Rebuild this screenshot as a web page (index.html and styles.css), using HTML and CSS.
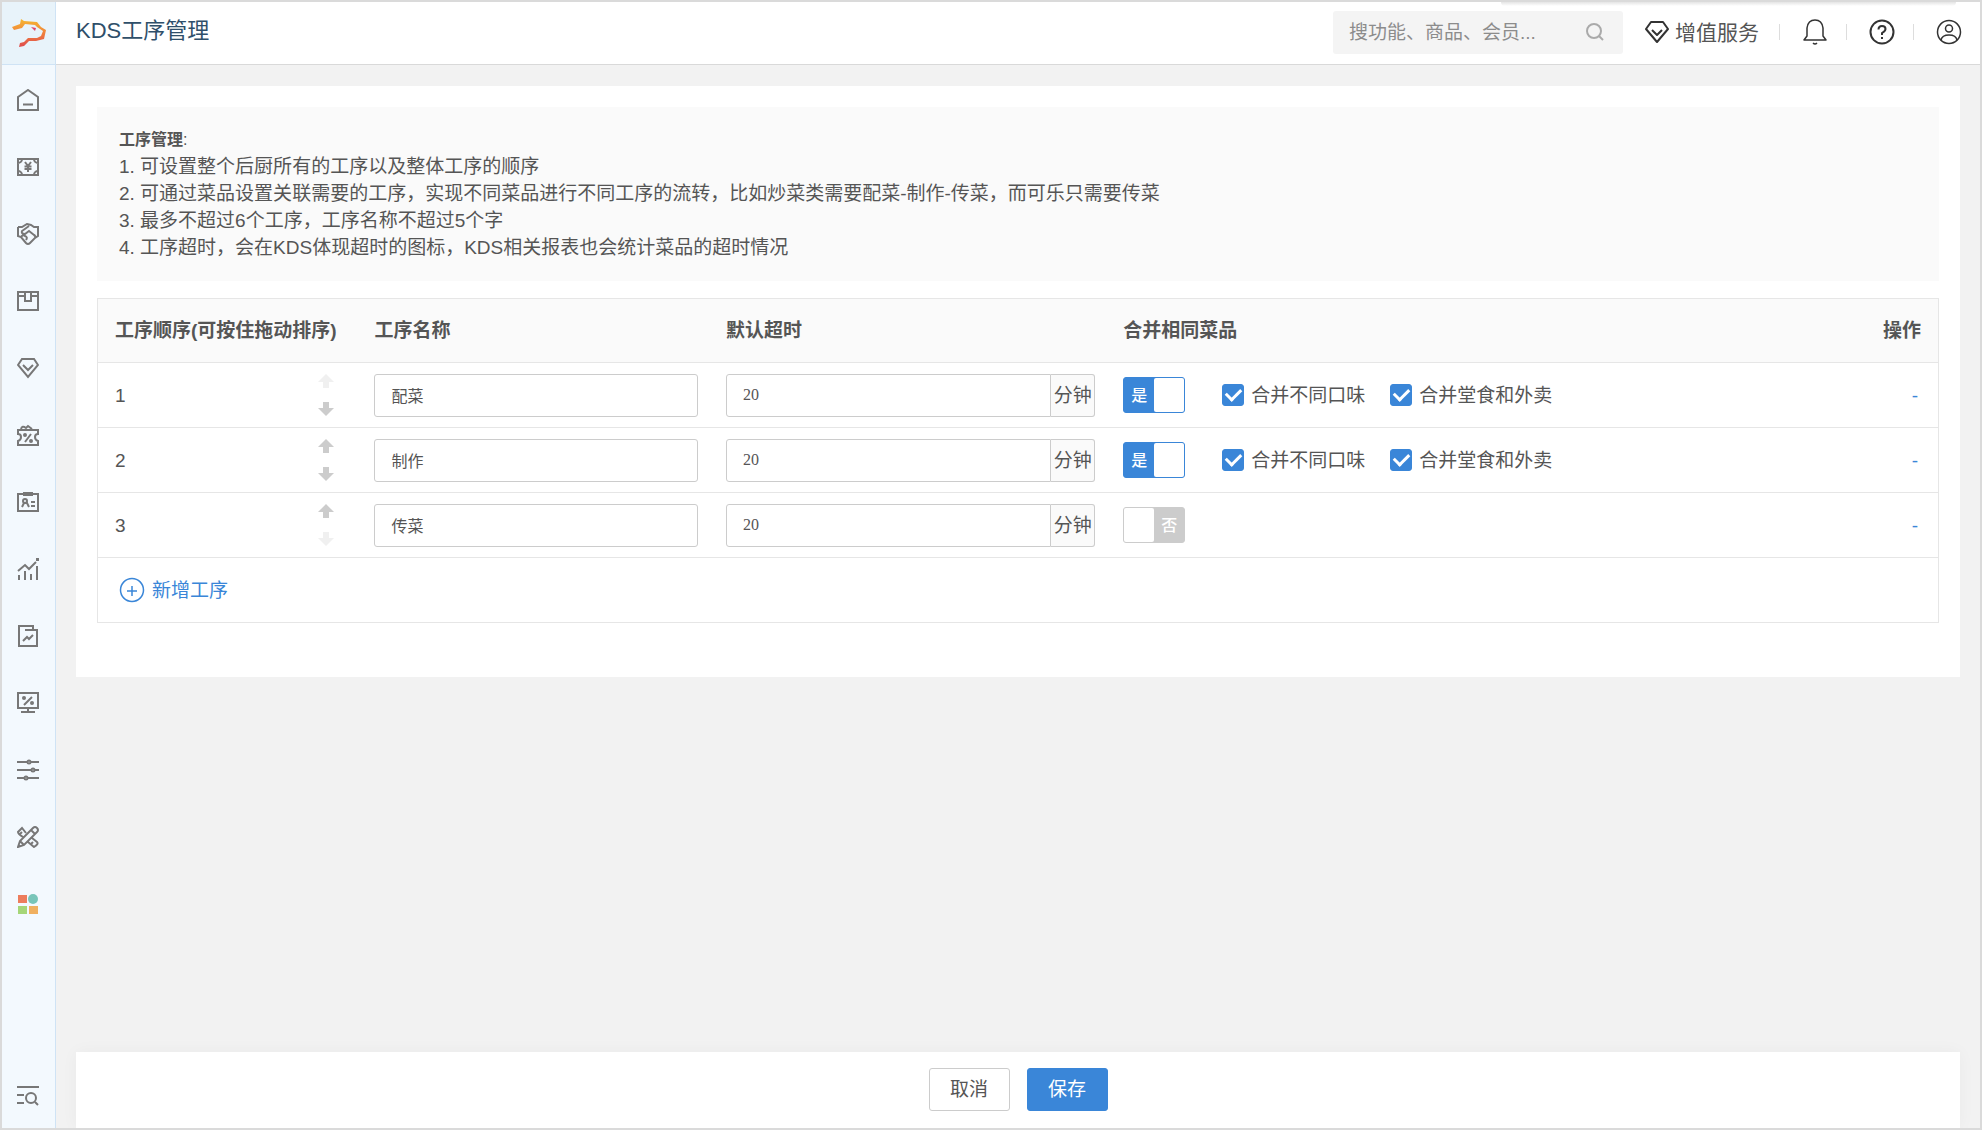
FILE: index.html
```html
<!DOCTYPE html>
<html lang="zh-CN">
<head>
    <meta charset="UTF-8">
    <meta name="viewport" content="width=device-width, initial-scale=1.0">
    <title>KDS工序管理</title>
    <link rel="stylesheet" href="styles.css">
</head>
<body>
    <aside class="sidebar">
        <a href="#" class="logo" aria-label="首页">
            <svg width="34" height="30" viewBox="0 0 34 30" fill="none">
                <defs>
                    <linearGradient id="logo-color" x1="0" y1="0" x2="0" y2="1">
                        <stop offset="0" stop-color="#f6b830"/>
                        <stop offset="0.5" stop-color="#f0813c"/>
                        <stop offset="1" stop-color="#de4a4e"/>
                    </linearGradient>
                </defs>
                <path d="M0 9L8 6L9 1L12 3L25 4L29 9L34 12L32 21L24 23L17 23L12 28L7 29L8 25L12 24L16 20L25 20L29 18L31 13L25 9L23 7L13 6L10 10L2 12Z" fill="url(#logo-color)"/>
                <path d="M19 9L24 10L23 13Z" fill="#e0456a"/>
            </svg>
        </a>
        <nav class="menu">
            <a href="#" aria-label="概览">
                <svg class="icon" viewBox="0 0 22 22"><path d="M1 8L11 1L21 8V21H1ZM6 15.500H16"/></svg>
            </a>
            <a href="#" aria-label="收银">
                <svg class="icon" viewBox="0 0 22 22"><path d="M1 3H21V19H1ZM1 7A4 4 0 0 0 5 3M17 3A4 4 0 0 0 21 7M1 15A4 4 0 0 1 5 19M21 15A4 4 0 0 0 17 19M8 6L11 10L14 6M11 10V16M7.500 10.500H14.500M7.500 13H14.500"/></svg>
            </a>
            <a href="#" aria-label="合作">
                <svg class="icon" viewBox="0 0 22 22"><path d="M1 4H5L10 1L14 2L17 4H21V13L18 15M1 4V13L4 14L9 20Q11 22 13 20L18 15Q19 13 17 12L12 8L8 11Q4 11 5 8L12 3M4 14Q6 11 8 13Q11 14 9 17"/></svg>
            </a>
            <a href="#" aria-label="库存">
                <svg class="icon" viewBox="0 0 22 22"><path d="M1 2H21V20H1ZM1 6H8M14 6H21M8 2V11H14V2"/></svg>
            </a>
            <a href="#" aria-label="会员">
                <svg class="icon" viewBox="0 0 22 22"><path d="M5 2H17L21 8L11 20L1 8ZM6 8L11 13L16 8"/></svg>
            </a>
            <a href="#" aria-label="优惠">
                <svg class="icon" viewBox="0 0 22 22"><path d="M1 6H21V10Q18 10 18 13Q18 16 21 17V21H1V17Q4 16 4 13Q4 10 1 10ZM4 5Q5 1 9 4L11 2L15 5M8 18L14 10"/><circle cx="8" cy="11" r="1"/><circle cx="14" cy="17" r="1"/></svg>
            </a>
            <a href="#" aria-label="员工">
                <svg class="icon" viewBox="0 0 22 22"><path d="M7 3H1V20H21V3H15M7 2H15V4H7ZM5 16L7 12H10L12 16M14 11H18M14 15H18"/><circle cx="8" cy="10" r="2"/></svg>
            </a>
            <a href="#" aria-label="统计">
                <svg class="icon" viewBox="0 0 22 22"><path d="M1 13L8 7L12 11L19 4M2 17V22M8 13V22M14 16V22M20 8V22"/><path d="M19 0H22V3H19Z" class="solid"/></svg>
            </a>
            <a href="#" aria-label="报表">
                <svg class="icon" viewBox="0 0 22 22"><path d="M16 5V1H2V21H20V5H8M6 16L10 12L12 14L16 10"/></svg>
            </a>
            <a href="#" aria-label="营销">
                <svg class="icon" viewBox="0 0 22 22"><path d="M1 1H21V16H1ZM11 16V19M4 20H18M7 13L15 5"/><circle cx="7" cy="6" r="2" class="solid"/><circle cx="15" cy="11" r="2" class="solid"/></svg>
            </a>
            <a href="#" aria-label="设置">
                <svg class="icon" viewBox="0 0 22 22"><path d="M0 3H22M0 11H22M0 19H22"/><g class="knob"><circle cx="12" cy="3" r="1.500"/><circle cx="16" cy="11" r="1.500"/><circle cx="9" cy="19" r="1.500"/></g></svg>
            </a>
            <a href="#" aria-label="工具">
                <svg class="icon" viewBox="0 0 22 22"><path d="M1 21L3 15L16 2Q18 0 20 2Q22 4 20 6L7 19ZM14 4L18 8M3 15L7 19M9 7L5 2L1 6Q1 8 6 11M3 8L5 6M15 12L20 16Q22 18 17 21L11 16M14 18L16 16"/></svg>
            </a>
            <a href="#" aria-label="应用">
                <svg width="22" height="22" viewBox="0 0 22 22">
                    <path d="M1 2H10V10H1Z" fill="#ed7d5d"/>
                    <circle cx="16" cy="6" r="5" fill="#78c5b9"/>
                    <path d="M1 13H10V21H1Z" fill="#a5d678"/>
                    <path d="M12 13H21V21H12Z" fill="#f0b060"/>
                </svg>
            </a>
        </nav>
        <a href="#" class="menu-search" aria-label="搜索菜单">
            <svg class="icon" viewBox="0 0 22 22"><path d="M0 2H22M0 10H7M0 18H7M18 17L21 20"/><circle cx="14" cy="13" r="5"/></svg>
        </a>
    </aside>

    <div class="page">
        <header class="header">
            <h1>KDS工序管理</h1>
            <div class="search">
                <input type="text" placeholder="搜功能、商品、会员..." aria-label="搜索">
                <svg width="20" height="20" viewBox="0 0 20 20" fill="none" stroke="#aaa" stroke-width="2"><circle cx="9" cy="9" r="7"/><path d="M14 14L18 18"/></svg>
            </div>
            <a href="#" class="service">
                <svg width="24" height="24" viewBox="0 0 24 24" fill="none" stroke="#333" stroke-width="2" stroke-linejoin="round"><path d="M6 2H18L23 9L12 22L1 9ZM7 10L12 15L17 10"/></svg>
                增值服务
            </a>
            <span class="divider"></span>
            <button class="header-button" aria-label="通知">
                <svg width="24" height="26" viewBox="0 0 24 26" fill="none" stroke="#333" stroke-width="1.500" stroke-linejoin="round"><path d="M1 21H23L20 17V9Q19 1 12 1Q5 1 4 9V17ZM10 24Q12 26 14 24"/></svg>
            </button>
            <span class="divider"></span>
            <button class="header-button" aria-label="帮助">
                <svg width="26" height="26" viewBox="0 0 26 26" fill="none" stroke="#333" stroke-width="2"><circle cx="13" cy="13" r="11.500"/><path d="M9.500 10.500Q9.500 7 13 7Q16.500 7 16.500 10Q16.500 12 13 14V16M13 18V20"/></svg>
            </button>
            <span class="divider"></span>
            <button class="header-button" aria-label="账号">
                <svg width="26" height="26" viewBox="0 0 26 26" fill="none" stroke="#333" stroke-width="1.500"><circle cx="13" cy="13" r="11.500"/><circle cx="13" cy="9.500" r="3.500"/><path d="M5 21Q6 16 13 16Q20 16 21 21"/></svg>
            </button>
        </header>

        <main class="content">
            <section class="card">
                <div class="notice">
                    <p class="notice-title"><b>工序管理</b>:</p>
                    <p>1. 可设置整个后厨所有的工序以及整体工序的顺序</p>
                    <p>2. 可通过菜品设置关联需要的工序，实现不同菜品进行不同工序的流转，比如炒菜类需要配菜-制作-传菜，而可乐只需要传菜</p>
                    <p>3. 最多不超过6个工序，工序名称不超过5个字</p>
                    <p>4. 工序超时，会在KDS体现超时的图标，KDS相关报表也会统计菜品的超时情况</p>
                </div>

                <table class="process-table">
                    <thead>
                        <tr>
                            <th class="col-order">工序顺序(可按住拖动排序)</th>
                            <th class="col-name">工序名称</th>
                            <th class="col-time">默认超时</th>
                            <th>合并相同菜品</th>
                            <th class="col-action">操作</th>
                        </tr>
                    </thead>
                    <tbody>
                        <tr>
                            <td>
                                <div class="order">
                                    1
                                    <div class="arrows">
                                        <button aria-label="上移" disabled><svg width="16" height="14" viewBox="0 0 16 14"><path d="M8 0L16 8H11V14H5V8H0Z"/></svg></button>
                                        <button aria-label="下移"><svg width="16" height="14" viewBox="0 0 16 14"><path d="M8 14L0 6H5V0H11V6H16Z"/></svg></button>
                                    </div>
                                </div>
                            </td>
                            <td><input type="text" class="field" value="配菜" aria-label="工序名称"></td>
                            <td>
                                <div class="time">
                                    <input type="text" class="field" id="time-1" value="20">
                                    <label for="time-1">分钟</label>
                                </div>
                            </td>
                            <td>
                                <div class="merge">
                                    <label class="switch">
                                        <input type="checkbox" aria-label="合并相同菜品" checked>
                                        <span>是</span>
                                    </label>
                                    <label class="check"><input type="checkbox" checked>合并不同口味</label>
                                    <label class="check"><input type="checkbox" checked>合并堂食和外卖</label>
                                </div>
                            </td>
                            <td class="col-action"><span class="action">-</span></td>
                        </tr>
                        <tr>
                            <td>
                                <div class="order">
                                    2
                                    <div class="arrows">
                                        <button aria-label="上移"><svg width="16" height="14" viewBox="0 0 16 14"><path d="M8 0L16 8H11V14H5V8H0Z"/></svg></button>
                                        <button aria-label="下移"><svg width="16" height="14" viewBox="0 0 16 14"><path d="M8 14L0 6H5V0H11V6H16Z"/></svg></button>
                                    </div>
                                </div>
                            </td>
                            <td><input type="text" class="field" value="制作" aria-label="工序名称"></td>
                            <td>
                                <div class="time">
                                    <input type="text" class="field" id="time-2" value="20">
                                    <label for="time-2">分钟</label>
                                </div>
                            </td>
                            <td>
                                <div class="merge">
                                    <label class="switch">
                                        <input type="checkbox" aria-label="合并相同菜品" checked>
                                        <span>是</span>
                                    </label>
                                    <label class="check"><input type="checkbox" checked>合并不同口味</label>
                                    <label class="check"><input type="checkbox" checked>合并堂食和外卖</label>
                                </div>
                            </td>
                            <td class="col-action"><span class="action">-</span></td>
                        </tr>
                        <tr>
                            <td>
                                <div class="order">
                                    3
                                    <div class="arrows">
                                        <button aria-label="上移"><svg width="16" height="14" viewBox="0 0 16 14"><path d="M8 0L16 8H11V14H5V8H0Z"/></svg></button>
                                        <button aria-label="下移" disabled><svg width="16" height="14" viewBox="0 0 16 14"><path d="M8 14L0 6H5V0H11V6H16Z"/></svg></button>
                                    </div>
                                </div>
                            </td>
                            <td><input type="text" class="field" value="传菜" aria-label="工序名称"></td>
                            <td>
                                <div class="time">
                                    <input type="text" class="field" id="time-3" value="20">
                                    <label for="time-3">分钟</label>
                                </div>
                            </td>
                            <td>
                                <div class="merge">
                                    <label class="switch switch-off">
                                        <input type="checkbox" aria-label="合并相同菜品">
                                        <span>否</span>
                                    </label>
                                </div>
                            </td>
                            <td class="col-action"><span class="action">-</span></td>
                        </tr>
                        <tr>
                            <td colspan="5">
                                <button class="add">
                                    <svg width="26" height="26" viewBox="0 0 26 26" fill="none" stroke="currentColor" stroke-width="1.500"><circle cx="13" cy="13" r="11.500"/><path d="M8 14H18M13 9V19"/></svg>
                                    新增工序
                                </button>
                            </td>
                        </tr>
                    </tbody>
                </table>
            </section>
        </main>

        <footer class="footer">
            <button class="button">取消</button>
            <button class="button button-primary">保存</button>
        </footer>
    </div>
</body>
</html>
```
FILE: styles.css
```css
* {
    box-sizing: border-box;
}

body {
    display: flex;
    min-height: 100vh;
    margin: 0;
    border: 2px solid #dadada;
    background-color: #f2f2f2;
    color: #555;
    font-family: "Liberation Sans", "Noto Sans CJK SC", sans-serif;
    font-size: 19px;
    line-height: 27px;
}

a {
    color: inherit;
    text-decoration: none;
}

button {
    padding: 0;
    border: none;
    background: none;
    color: inherit;
    font: inherit;
    cursor: pointer;
}

svg {
    display: block;
}

/* Sidebar */
.sidebar {
    display: flex;
    flex-direction: column;
    flex: none;
    width: 54px;
    border-right: 1px solid #cfe3f5;
    background-color: #f3f9fe;
}

.logo {
    display: flex;
    justify-content: center;
    align-items: center;
    height: 63px;
    border-bottom: 1px solid #cfe3f5;
    background-color: #e8f3fa;
}

.menu {
    flex: 1;
    padding: 1px 2px 0 0;
}

.menu a {
    display: flex;
    justify-content: center;
    align-items: center;
    height: 67px;
}

.icon {
    width: 22px;
    height: 22px;
    fill: none;
    stroke: #777;
    stroke-width: 2;
}

.icon .solid {
    fill: #777;
    stroke: none;
}

.icon .knob {
    fill: #f3f9fe;
}

.menu-search {
    display: flex;
    justify-content: center;
    padding: 0 2px 21px 0;
}

/* Header */
.page {
    display: flex;
    flex-direction: column;
    flex: 1;
    min-width: 0;
}

.header {
    position: relative;
    display: flex;
    align-items: center;
    height: 63px;
    padding: 0 18px 2px 20px;
    border-bottom: 1px solid #d9d9d9;
    background-color: #fff;
}

.header::after {
    content: "";
    position: absolute;
    top: 0;
    right: 24px;
    width: 455px;
    height: 4px;
    border-radius: 0 0 8px 8px;
    background: linear-gradient(#e4e4e4, #fff);
}

h1 {
    flex: 1;
    margin: 0;
    padding-bottom: 4px;
    color: #2f4f6a;
    font-size: 22px;
    font-weight: normal;
}

.search {
    display: flex;
    align-items: center;
    width: 290px;
    height: 43px;
    margin-right: 22px;
    padding: 0 18px 0 16px;
    border-radius: 3px;
    background-color: #f4f4f4;
}

.search input {
    flex: 1;
    min-width: 0;
    padding: 0;
    border: none;
    outline: none;
    background: none;
    color: #555;
    font: inherit;
}

.search input::placeholder {
    color: #8c8c8c;
}

.service {
    display: flex;
    align-items: center;
    gap: 6px;
    margin-right: 2px;
    font-size: 21px;
}

.divider {
    width: 1px;
    height: 16px;
    margin: 0 22px 0 18px;
    background-color: #ddd;
}

.header-button {
    display: flex;
    justify-content: center;
    width: 26px;
}

/* Content */
.content {
    flex: 1;
    padding: 21px 20px;
}

.card {
    padding: 21px 21px 54px;
    background-color: #fff;
}

.notice {
    margin-bottom: 17px;
    padding: 19px 22px 20px;
    background-color: #fafafa;
}

.notice p {
    margin: 0;
}

.notice .notice-title {
    font-size: 16px;
}

.process-table {
    width: 100%;
    border: 1px solid #e6e6e6;
    border-bottom: none;
    border-spacing: 0;
    table-layout: fixed;
}

.process-table th,
.process-table td {
    height: 65px;
    padding: 0 11px 0 17px;
    border-bottom: 1px solid #e6e6e6;
    text-align: left;
}

.process-table th {
    height: 64px;
    background-color: #fafafa;
    white-space: nowrap;
}

.process-table .col-order {
    width: 14.1%;
}

.process-table .col-name {
    width: 19.1%;
}

.process-table .col-time {
    width: 21.6%;
}

.process-table .col-action {
    width: 100px;
    padding-right: 17px;
    text-align: right;
}

.order {
    display: flex;
    justify-content: space-between;
    align-items: center;
    padding-right: 12px;
}

.arrows {
    display: flex;
    flex-direction: column;
    gap: 14px;
}

.arrows button {
    fill: #ccc;
}

.arrows button:disabled {
    fill: #f0f0f0;
}

.field {
    display: block;
    width: 100%;
    height: 43px;
    padding: 0 16px;
    border: 1px solid #ccc;
    border-radius: 3px;
    background-color: #fff;
    color: #555;
    font-family: "Liberation Serif", "Noto Sans CJK SC", serif;
    font-size: 16px;
}

.time {
    display: flex;
}

.time .field {
    flex: 1;
    min-width: 0;
    border-radius: 3px 0 0 3px;
}

.time label {
    display: flex;
    justify-content: center;
    align-items: center;
    width: 44px;
    border: 1px solid #ccc;
    border-left: none;
    border-radius: 0 3px 3px 0;
    background-color: #fafafa;
}

.merge {
    display: flex;
    align-items: center;
}

.switch {
    display: flex;
    width: 62px;
    height: 36px;
    margin-right: 37px;
    border: 1px solid #3a86d8;
    border-radius: 3px;
    background-color: #3a86d8;
    color: #fff;
    font-size: 16px;
    font-weight: 500;
    cursor: pointer;
}

.switch span {
    display: flex;
    justify-content: center;
    align-items: center;
    flex: 1;
}

/* The tick box itself is the white knob */
.switch input {
    appearance: none;
    order: 1;
    width: 30px;
    margin: 0;
    border-radius: 2px;
    background-color: #fff;
    cursor: pointer;
}

.switch-off {
    border-color: #ccc;
    background-color: #ccc;
}

.switch-off input {
    order: 0;
}

.check {
    display: flex;
    align-items: center;
    gap: 7px;
    margin-right: 25px;
    cursor: pointer;
}

.check input {
    appearance: none;
    display: flex;
    justify-content: center;
    align-items: center;
    width: 22px;
    height: 22px;
    margin: 0;
    border: 1px solid #ccc;
    border-radius: 3px;
}

.check input:checked {
    border-color: #3a86d8;
    background-color: #3a86d8;
}

.check input:checked::before {
    content: "";
    width: 12px;
    height: 7px;
    margin-bottom: 4px;
    border: solid #fff;
    border-width: 0 0 3px 3px;
    transform: rotate(-45deg);
}

.action {
    padding-right: 3px;
    color: #3a86d8;
}

.add {
    display: flex;
    align-items: center;
    gap: 7px;
    margin-left: 4px;
    color: #3a86d8;
}

/* Footer */
.footer {
    display: flex;
    justify-content: center;
    gap: 17px;
    margin: 0 20px;
    padding: 16px 16px 17px;
    background-color: #fff;
    box-shadow: 0 0 16px rgba(0, 0, 0, 0.04);
}

.button {
    width: 81px;
    height: 43px;
    border: 1px solid #ccc;
    border-radius: 3px;
    background-color: #fff;
}

.button-primary {
    border-color: #3a86d8;
    background-color: #3a86d8;
    color: #fff;
}
```
